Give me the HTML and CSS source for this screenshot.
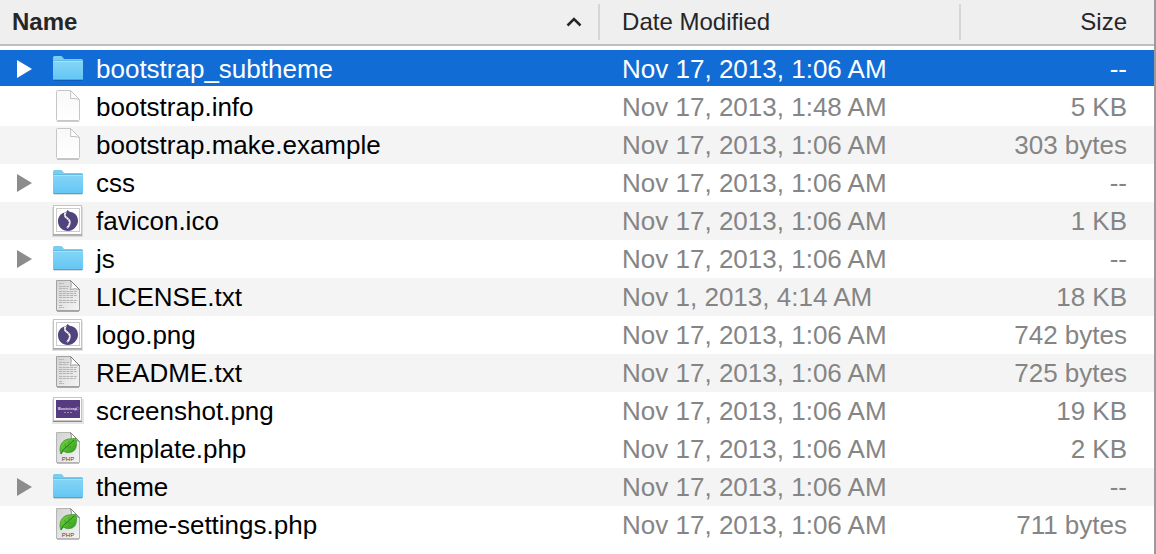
FILE: index.html
```
<!DOCTYPE html>
<html lang="en">
<head>
<meta charset="utf-8">
<title>Files</title>
<link rel="stylesheet" href="styles.css">
</head>
<body>
<svg class="sprites" aria-hidden="true">
  <defs>
    <linearGradient id="folder-fill" x1="0" y1="0" x2="0" y2="1"><stop offset="0" stop-color="#84d5f7"/><stop offset="1" stop-color="#63c6f3"/></linearGradient>
    <linearGradient id="paper-fill" x1="0" y1="0" x2="0" y2="1"><stop offset="0" stop-color="#f8f8f8"/><stop offset="1" stop-color="#ffffff"/></linearGradient>
    <linearGradient id="gray-fill" x1="0" y1="0" x2="1" y2="1"><stop offset="0" stop-color="#d2d2d2"/><stop offset="1" stop-color="#f5f5f5"/></linearGradient>
    <linearGradient id="leaf-fill" x1="0" y1="0" x2="1" y2="1"><stop offset="0" stop-color="#7bd53c"/><stop offset="1" stop-color="#2c9b20"/></linearGradient>
  </defs>
  <symbol id="folder" viewBox="0 0 32 36">
    <path d="M1 29V7.500Q1 6 2.500 6H9Q10.200 6 11 7.500L12 9H29.500Q31 9 31 10.500V29Z" fill="#7bcdf0"/>
    <path d="M1 11H31V28.500Q31 30 29.500 30H2.500Q1 30 1 28.500Z" fill="url(#folder-fill)"/>
    <path d="M1 10.500H31" stroke="#62bde4"/>
    <path d="M1.500 11.500H30.500" stroke="#a3e2fb"/>
    <path d="M1.500 29.500H30.500" stroke="#4ba6d2"/>
    <path d="M2 30.500H30" stroke="#000" stroke-opacity=".15"/>
  </symbol>
  <symbol id="file" viewBox="0 0 32 36">
    <path d="M5 33.500H27" stroke="#000" stroke-opacity=".2"/>
    <path d="M4.500 3.500Q4.500 2.500 5.500 2.500H18.500L27.500 11.500V31.500Q27.500 32.500 26.500 32.500H5.500Q4.500 32.500 4.500 31.500Z" fill="url(#paper-fill)" stroke="#c6c6c6"/>
    <path d="M18.500 2.500Q19 7 18.500 10.500Q23 10 27.500 11.500Z" fill="#fff" stroke="#c2c2c2"/>
  </symbol>
  <symbol id="text" viewBox="0 0 32 36">
    <path d="M5 33.500H27" stroke="#000" stroke-opacity=".3"/>
    <path d="M4.500 2.500H18.500L27.500 11.500V32.500H4.500Z" fill="url(#gray-fill)" stroke="#a2a2a2"/>
    <path d="M7 5.500h5M7 8.500h10M7 10.500h9M7 13.500h18M7 15.500h17M7 17.500h18M7 19.500h14M7 22.500h18M7 24.500h17M7 27.500h4M7 29.500h5" stroke="#b4b4b4" stroke-dasharray="3 .7"/>
    <path d="M18.500 2.500Q20 7 18.500 11.500Q23 10 27.500 11.500Z" fill="#fff" stroke="#a0a0a0"/>
    <path d="M18.500 2.500L27.500 11.500" stroke="#777"/>
  </symbol>
  <symbol id="drop" viewBox="0 0 32 36">
    <rect x="0" y="5" width="31" height="30" fill="#000" opacity=".1"/>
    <rect x="1.500" y="3.500" width="28" height="29" fill="#fff" stroke="#c4c4c4"/>
    <path d="M1 33H30" stroke="#8c8c8c"/>
    <rect x="4.500" y="6.500" width="23" height="23" fill="#fff" stroke="#ccc"/>
    <path d="M15.500 8Q17.500 10 18.500 10C23 10.500 26 14 26 19C26 24 21 29 16 29C10.500 29 6 25 6 19.500C6 15 8.500 11.500 12.500 10.500Q14.500 10 15.500 8Z" fill="#51437c"/>
    <path d="M14 10C11.500 13 13 15 15.500 16.500C18.500 18.500 19 22 15 26" fill="none" stroke="#fff" stroke-width="1.800"/>
    <path d="M14 10C11.500 13 13 15 15.500 16.500C18.500 18.500 19 22 15 26" fill="none" stroke="#8d80ab" stroke-width=".9" stroke-dasharray="1 2"/>
  </symbol>
  <symbol id="screen" viewBox="0 0 32 36">
    <rect x="0" y="7" width="32" height="25" fill="#000" opacity=".1"/>
    <rect x="1.500" y="5.500" width="28" height="23" fill="#fff" stroke="#c4c4c4"/>
    <path d="M1 29.500H30" stroke="#8c8c8c"/>
    <rect x="4" y="8" width="24" height="18" fill="#563b80"/>
    <path d="M12 20.500H20" stroke="#9c8ab7" stroke-dasharray="2 1"/>
    <circle cx="25.500" cy="16.500" r="1.500" fill="none" stroke="#9c8ab7" stroke-width=".7"/>
  </symbol>
  <symbol id="php" viewBox="0 0 32 36">
    <path d="M5 33.500H27" stroke="#000" stroke-opacity=".25"/>
    <path d="M4.500 2.500H18.500L27.500 11.500V32.500H4.500Z" fill="url(#gray-fill)" stroke="#b5b5b5"/>
    <path d="M18.500 2.500Q20 6 19 10.500Q23 9 27.500 11.500Z" fill="#fff" stroke="#888"/>
    <path d="M9 24C6 17 10 10 16 9Q20 9 24 8C25 14 25 20 20 22Q15 24 11 21Z" fill="url(#leaf-fill)" stroke="#37922a" stroke-width=".7"/>
    <path d="M9 24Q11 19 14 17T22 10" fill="none" stroke="#21801b"/>
    <path d="M14 17L12.500 14M17 15V11.500M15 17H19" fill="none" stroke="#32911f" stroke-width=".6"/>
  </symbol>
  <symbol id="arrow" viewBox="0 0 24 18"><path d="M5 0L20 9L5 18Z" fill="currentColor"/></symbol>
</svg>
<main class="finder">
  <table class="files">
    <colgroup><col class="col-name"><col class="col-date"><col class="col-size"></colgroup>
    <thead>
      <tr>
        <th scope="col" aria-sort="ascending"><button class="sort sort-active">Name<svg class="chevron" viewBox="0 0 16 10"><path d="M1.500 8.500L8 2L14.500 8.500" fill="none" stroke="currentColor" stroke-width="2.500"/></svg></button></th>
        <th scope="col"><button class="sort">Date Modified</button></th>
        <th scope="col"><button class="sort sort-end">Size</button></th>
      </tr>
    </thead>
    <tbody>
      <tr class="selected"><td><div class="name"><button class="toggle" aria-label="Expand bootstrap_subtheme"><svg class="arrow"><use href="#arrow"/></svg></button><svg class="icon"><use href="#folder"/></svg>bootstrap_subtheme</div></td><td>Nov 17, 2013, 1:06 AM</td><td>--</td></tr>
      <tr><td><div class="name"><span class="toggle"></span><svg class="icon"><use href="#file"/></svg>bootstrap.info</div></td><td>Nov 17, 2013, 1:48 AM</td><td>5 KB</td></tr>
      <tr class="shaded"><td><div class="name"><span class="toggle"></span><svg class="icon"><use href="#file"/></svg>bootstrap.make.example</div></td><td>Nov 17, 2013, 1:06 AM</td><td>303 bytes</td></tr>
      <tr><td><div class="name"><button class="toggle" aria-label="Expand css"><svg class="arrow"><use href="#arrow"/></svg></button><svg class="icon"><use href="#folder"/></svg>css</div></td><td>Nov 17, 2013, 1:06 AM</td><td>--</td></tr>
      <tr class="shaded"><td><div class="name"><span class="toggle"></span><svg class="icon"><use href="#drop"/></svg>favicon.ico</div></td><td>Nov 17, 2013, 1:06 AM</td><td>1 KB</td></tr>
      <tr><td><div class="name"><button class="toggle" aria-label="Expand js"><svg class="arrow"><use href="#arrow"/></svg></button><svg class="icon"><use href="#folder"/></svg>js</div></td><td>Nov 17, 2013, 1:06 AM</td><td>--</td></tr>
      <tr class="shaded"><td><div class="name"><span class="toggle"></span><svg class="icon"><use href="#text"/></svg>LICENSE.txt</div></td><td>Nov 1, 2013, 4:14 AM</td><td>18 KB</td></tr>
      <tr><td><div class="name"><span class="toggle"></span><svg class="icon"><use href="#drop"/></svg>logo.png</div></td><td>Nov 17, 2013, 1:06 AM</td><td>742 bytes</td></tr>
      <tr class="shaded"><td><div class="name"><span class="toggle"></span><svg class="icon"><use href="#text"/></svg>README.txt</div></td><td>Nov 17, 2013, 1:06 AM</td><td>725 bytes</td></tr>
      <tr><td><div class="name"><span class="toggle"></span><svg class="icon"><use href="#screen"/><text x="6" y="18" class="screen-label">Bootstrap</text></svg>screenshot.png</div></td><td>Nov 17, 2013, 1:06 AM</td><td>19 KB</td></tr>
      <tr><td><div class="name"><span class="toggle"></span><svg class="icon"><use href="#php"/><text x="16" y="31" text-anchor="middle" class="php-label">PHP</text></svg>template.php</div></td><td>Nov 17, 2013, 1:06 AM</td><td>2 KB</td></tr>
      <tr class="shaded"><td><div class="name"><button class="toggle" aria-label="Expand theme"><svg class="arrow"><use href="#arrow"/></svg></button><svg class="icon"><use href="#folder"/></svg>theme</div></td><td>Nov 17, 2013, 1:06 AM</td><td>--</td></tr>
      <tr><td><div class="name"><span class="toggle"></span><svg class="icon"><use href="#php"/><text x="16" y="31" text-anchor="middle" class="php-label">PHP</text></svg>theme-settings.php</div></td><td>Nov 17, 2013, 1:06 AM</td><td>711 bytes</td></tr>
    </tbody>
  </table>
</main>
</body>
</html>
```
FILE: styles.css
```
* {
  box-sizing: border-box;
}

body {
  margin: 0;
  background: #fff;
  font-family: "Liberation Sans", Arial, sans-serif;
}

.sprites {
  position: absolute;
  width: 0;
  height: 0;
}

.finder {
  min-height: 100vh;
  border-right: 2px solid #9b9b9b;
}

.files {
  width: 100%;
  table-layout: fixed;
  border-collapse: separate;
  border-spacing: 0;
}

.col-name { width: 52%; }
.col-date { width: 31.3%; }

th {
  padding: 4px 0;
  background: #efefef;
  border-bottom: 2px solid #bebebe;
}

.sort {
  display: flex;
  align-items: center;
  justify-content: space-between;
  width: 100%;
  height: 36px;
  padding: 0 16px 0 22px;
  border: 0;
  border-right: 2px solid #d6d6d6;
  background: none;
  color: #262626;
  font: 24px/36px "Liberation Sans", Arial, sans-serif;
}

.sort-active {
  padding-left: 12px;
  font-weight: bold;
}

.sort-end {
  justify-content: flex-end;
  padding-right: 27px;
  border-right: 0;
}

.chevron {
  width: 16px;
  height: 10px;
}

/* Space between the header rule and the first row */
tbody::before {
  content: "";
  display: table-row;
  height: 4px;
}

td {
  padding: 0;
  color: #858585;
  font-size: 26px;
  line-height: 38px;
  white-space: nowrap;
}

td:nth-child(2) { padding-left: 22px; }

td:nth-child(3) {
  padding-right: 27px;
  text-align: right;
}

.shaded td { background: #f4f4f4; }

/* The highlight stops short of the next row */
.selected td {
  background: linear-gradient(#116cd6 36px, #fff 36px);
  color: #fff;
}

.name {
  display: flex;
  align-items: flex-start;
  padding-left: 12px;
  color: #000;
}

.selected .name { color: #fff; }

.toggle {
  display: flex;
  align-items: center;
  width: 24px;
  height: 38px;
  padding: 0;
  margin-right: 16px;
  border: 0;
  background: none;
  color: #8c8c8c;
}

.selected .toggle { color: #fff; }

.arrow {
  width: 24px;
  height: 18px;
}

.icon {
  width: 32px;
  height: 36px;
  margin-right: 12px;
}

.screen-label {
  fill: #e5dcf0;
  font-size: 4px;
  font-weight: bold;
}

.php-label {
  fill: #444;
  font-size: 6px;
}
```
